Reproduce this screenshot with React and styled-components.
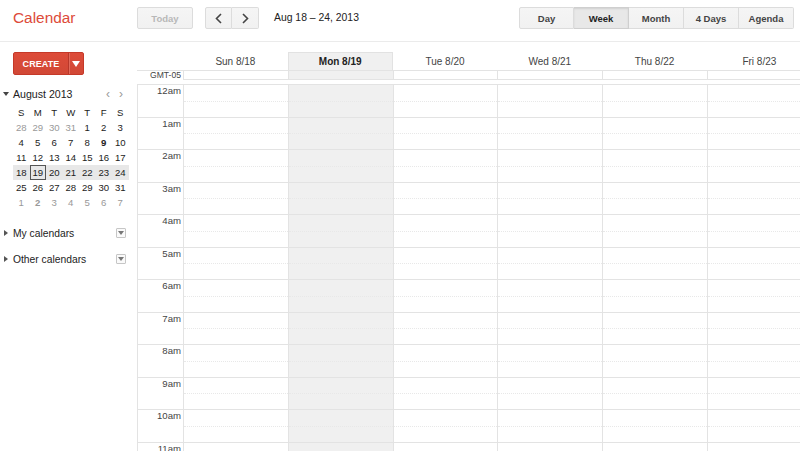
import React from 'react';
import styled, { createGlobalStyle } from 'styled-components';

const GlobalStyle = createGlobalStyle`
  html, body {
    margin: 0;
    padding: 0;
    background: #fff;
    font-family: "Liberation Sans", Arial, sans-serif;
    color: #222;
    overflow: hidden;
  }
  * {
    box-sizing: border-box;
  }
`;

const COL_W = 104.8;
const HOUR_H = 32.5;

const days = [
  { label: 'Sun 8/18' },
  { label: 'Mon 8/19', today: true },
  { label: 'Tue 8/20' },
  { label: 'Wed 8/21' },
  { label: 'Thu 8/22' },
  { label: 'Fri 8/23' },
  { label: '' },
];

const hours = [
  '12am', '1am', '2am', '3am', '4am', '5am', '6am', '7am', '8am', '9am', '10am', '11am',
];

const weeks = [
  [
    { d: 28, other: true }, { d: 29, other: true }, { d: 30, other: true }, { d: 31, other: true },
    { d: 1 }, { d: 2 }, { d: 3 },
  ],
  [{ d: 4 }, { d: 5 }, { d: 6 }, { d: 7 }, { d: 8 }, { d: 9, bold: true }, { d: 10 }],
  [{ d: 11 }, { d: 12 }, { d: 13 }, { d: 14 }, { d: 15 }, { d: 16 }, { d: 17 }],
  [{ d: 18 }, { d: 19, today: true }, { d: 20 }, { d: 21 }, { d: 22 }, { d: 23 }, { d: 24 }],
  [{ d: 25 }, { d: 26 }, { d: 27 }, { d: 28 }, { d: 29 }, { d: 30 }, { d: 31 }],
  [
    { d: 1, other: true }, { d: 2, other: true, bold: true }, { d: 3, other: true },
    { d: 4, other: true }, { d: 5, other: true }, { d: 6, other: true }, { d: 7, other: true },
  ],
];

const App = () => {
  return (
    <>
      <GlobalStyle />
      <Page>
        <Header>
          <Logo>Calendar</Logo>
          <Toolbar>
            <ToolButton $w={56} $disabled>Today</ToolButton>
            <NavGroup>
              <ToolButton $w={27} $first>
                <Chevron dir="left" />
              </ToolButton>
              <ToolButton $w={27} $last>
                <Chevron dir="right" />
              </ToolButton>
            </NavGroup>
            <DateRange>Aug 18 – 24, 2013</DateRange>
            <ViewGroup>
              {['Day', 'Week', 'Month', '4 Days', 'Agenda'].map((v, i, arr) => (
                <ViewButton
                  key={v}
                  $active={v === 'Week'}
                  $first={i === 0}
                  $last={i === arr.length - 1}
                >
                  {v}
                </ViewButton>
              ))}
            </ViewGroup>
          </Toolbar>
        </Header>

        <Main>
          <Sidebar>
            <CreateButton>
              <CreateLabel>CREATE</CreateLabel>
              <CreateDrop>
                <svg width="8" height="6" viewBox="0 0 8 6">
                  <path d="M0 0 L8 0 L4 6 Z" fill="#fff" />
                </svg>
              </CreateDrop>
            </CreateButton>

            <MiniTitleRow>
              <MiniTitle>
                <Caret>
                  <svg width="6" height="4" viewBox="0 0 6 4">
                    <path d="M0 0 L6 0 L3 4 Z" fill="#444" />
                  </svg>
                </Caret>
                August 2013
              </MiniTitle>
              <MiniNav>
                <span>‹</span>
                <span>›</span>
              </MiniNav>
            </MiniTitleRow>
            <MiniGrid>
              {['S', 'M', 'T', 'W', 'T', 'F', 'S'].map((l, i) => (
                <MiniHead key={i}>{l}</MiniHead>
              ))}
              {weeks.map((week, wi) => (
                <MiniWeek key={wi} $selected={wi === 3}>
                  {week.map((c, ci) => (
                    <MiniDay key={ci} $other={c.other} $bold={c.bold} $today={c.today}>
                      {c.d}
                    </MiniDay>
                  ))}
                </MiniWeek>
              ))}
            </MiniGrid>

            <CalSections>
              {['My calendars', 'Other calendars'].map(name => (
                <CalSection key={name}>
                  <SectionCaret>
                    <svg width="4" height="6" viewBox="0 0 4 6">
                      <path d="M0 0 L4 3 L0 6 Z" fill="#555" />
                    </svg>
                  </SectionCaret>
                  <SectionLabel>{name}</SectionLabel>
                  <MenuBox>
                    <svg width="6" height="4" viewBox="0 0 6 4">
                      <path d="M0 0 L6 0 L3 4 Z" fill="#777" />
                    </svg>
                  </MenuBox>
                </CalSection>
              ))}
            </CalSections>
          </Sidebar>

          <Pane>
            <DayHeaderRow>
              <TimeGutter />
              {days.map((d, i) => (
                <DayHead key={i} $today={d.today}>
                  {d.label}
                </DayHead>
              ))}
            </DayHeaderRow>
            <AllDayRow>
              <TzLabel>GMT-05</TzLabel>
              {days.map((d, i) => (
                <AllDayCell key={i} $today={d.today} />
              ))}
            </AllDayRow>
            <TimeGrid>
              <TimeColumn>
                {hours.map(h => (
                  <TimeLabel key={h}>{h}</TimeLabel>
                ))}
              </TimeColumn>
              {days.map((d, i) => (
                <DayColumn key={i} $today={d.today}>
                  {hours.map(h => (
                    <HourSlot key={h} />
                  ))}
                </DayColumn>
              ))}
            </TimeGrid>
          </Pane>
        </Main>
      </Page>
    </>
  );
};

const Chevron = ({ dir }) => (
  <svg width="7" height="11" viewBox="0 0 7 11">
    <path
      d={dir === 'left' ? 'M6 1 L1.5 5.5 L6 10' : 'M1 1 L5.5 5.5 L1 10'}
      fill="none"
      stroke="#444"
      strokeWidth="1.6"
    />
  </svg>
);

export default App;

const Page = styled.div`
  width: 800px;
  height: 451px;
  overflow: hidden;
  display: flex;
  flex-direction: column;
`;

const Header = styled.div`
  height: 42px;
  flex-shrink: 0;
  display: flex;
  border-bottom: 1px solid #ebebeb;
`;

const Logo = styled.div`
  width: 137px;
  padding-left: 13px;
  padding-top: 9px;
  font-size: 15.4px;
  color: #dd4b39;
  line-height: 18px;
`;

const Toolbar = styled.div`
  flex: 1;
  display: flex;
  align-items: flex-start;
  padding-top: 7px;
  padding-right: 6px;
`;

const ToolButton = styled.div`
  width: ${p => p.$w}px;
  height: 22px;
  display: flex;
  align-items: center;
  justify-content: center;
  border: 1px solid #dcdcdc;
  border-radius: ${p => (p.$first ? '2px 0 0 2px' : p.$last ? '0 2px 2px 0' : '2px')};
  background: linear-gradient(#f5f5f5, #f1f1f1);
  font-size: 9.5px;
  font-weight: bold;
  color: ${p => (p.$disabled ? '#b8b8b8' : '#444')};
  & + & {
    border-left: none;
  }
`;

const NavGroup = styled.div`
  display: flex;
  margin-left: 12px;
`;

const DateRange = styled.div`
  margin-left: 15px;
  font-size: 10.4px;
  line-height: 22px;
  color: #222;
`;

const ViewGroup = styled.div`
  margin-left: auto;
  display: flex;
`;

const ViewButton = styled.div`
  width: 55px;
  height: 22px;
  display: flex;
  align-items: center;
  justify-content: center;
  border: 1px solid ${p => (p.$active ? '#cfcfcf' : '#dcdcdc')};
  border-left: ${p => (p.$first ? '1px solid #dcdcdc' : 'none')};
  border-radius: ${p => (p.$first ? '2px 0 0 2px' : p.$last ? '0 2px 2px 0' : '0')};
  background: ${p => (p.$active ? '#e8e8e8' : 'linear-gradient(#f5f5f5, #f1f1f1)')};
  box-shadow: ${p => (p.$active ? 'inset 0 1px 2px rgba(0,0,0,0.1)' : 'none')};
  font-size: 9.5px;
  font-weight: bold;
  color: ${p => (p.$active ? '#222' : '#444')};
`;

const Main = styled.div`
  flex: 1;
  display: flex;
  min-height: 0;
`;

const Sidebar = styled.div`
  width: 137px;
  flex-shrink: 0;
  padding: 10px 0 0 13px;
`;

const CreateButton = styled.div`
  width: 71px;
  height: 23px;
  display: flex;
  border: 1px solid #c53929;
  border-radius: 2px;
  background: linear-gradient(#dd4b39, #d14836);
`;

const CreateLabel = styled.div`
  width: 54px;
  display: flex;
  align-items: center;
  justify-content: center;
  color: #fff;
  font-size: 9px;
  font-weight: bold;
  letter-spacing: 0.1px;
`;

const CreateDrop = styled.div`
  flex: 1;
  display: flex;
  align-items: center;
  justify-content: center;
  border-left: 1px solid #b8372a;
  box-shadow: inset 1px 0 0 #e06a5b;
`;

const MiniTitleRow = styled.div`
  margin-top: 11px;
  height: 15px;
  width: 115px;
  display: flex;
  align-items: center;
`;

const MiniTitle = styled.div`
  position: relative;
  font-size: 10.6px;
  color: #222;
`;

const Caret = styled.span`
  position: absolute;
  left: -10px;
  top: 4px;
  display: flex;
`;

const MiniNav = styled.div`
  margin-left: auto;
  display: flex;
  gap: 9px;
  padding-right: 5px;
  font-size: 12px;
  color: #999;
`;

const MiniGrid = styled.div`
  width: 115.5px;
  display: grid;
  grid-template-columns: repeat(7, 16.5px);
  margin-top: 4px;
`;

const MiniHead = styled.div`
  height: 15px;
  line-height: 15px;
  text-align: center;
  font-size: 9.6px;
  color: #222;
`;

const MiniWeek = styled.div`
  grid-column: 1 / -1;
  display: grid;
  grid-template-columns: repeat(7, 16.5px);
  background: ${p => (p.$selected ? '#e8e8e8' : 'transparent')};
`;

const MiniDay = styled.div`
  height: 15px;
  line-height: 13px;
  text-align: center;
  font-size: 9.6px;
  font-weight: ${p => (p.$bold ? 'bold' : 'normal')};
  color: ${p => (p.$other ? '#999' : '#222')};
  border: 1px solid ${p => (p.$today ? '#555' : 'transparent')};
`;

const CalSections = styled.div`
  margin-top: 10px;
`;

const CalSection = styled.div`
  width: 113px;
  height: 26px;
  display: flex;
  align-items: center;
  position: relative;
`;

const SectionCaret = styled.span`
  position: absolute;
  left: -9px;
  display: flex;
`;

const SectionLabel = styled.div`
  font-size: 10.3px;
  color: #222;
`;

const MenuBox = styled.div`
  margin-left: auto;
  width: 10px;
  height: 10px;
  border: 1px solid #c6c6c6;
  border-radius: 1px;
  display: flex;
  align-items: center;
  justify-content: center;
  background: #fafafa;
`;

const Pane = styled.div`
  flex: 1;
  min-width: 0;
  overflow: hidden;
  padding-top: 10px;
`;

const DayHeaderRow = styled.div`
  display: flex;
  height: 18px;
`;

const TimeGutter = styled.div`
  width: 46px;
  flex-shrink: 0;
`;

const DayHead = styled.div`
  width: ${COL_W}px;
  flex-shrink: 0;
  text-align: center;
  font-size: 10px;
  line-height: 18px;
  font-weight: ${p => (p.$today ? 'bold' : 'normal')};
  color: ${p => (p.$today ? '#222' : '#444')};
  background: ${p => (p.$today ? '#f0f0f0' : 'transparent')};
  border: 1px solid ${p => (p.$today ? '#e2e2e2' : 'transparent')};
  border-bottom: none;
`;

const AllDayRow = styled.div`
  display: flex;
  height: 10px;
  border-top: 1px solid #e3e3e3;
  margin-bottom: 4px;
`;

const TzLabel = styled.div`
  width: 46px;
  flex-shrink: 0;
  padding-right: 2px;
  text-align: right;
  font-size: 8.6px;
  line-height: 8px;
  color: #444;
`;

const AllDayCell = styled.div`
  width: ${COL_W}px;
  flex-shrink: 0;
  border-bottom: 1px solid #e3e3e3;
  border-left: 1px solid #e3e3e3;
  background: ${p => (p.$today ? '#f0f0f0' : '#fff')};
`;

const TimeGrid = styled.div`
  display: flex;
  border-top: 1px solid #e3e3e3;
  border-left: 1px solid #e3e3e3;
`;

const TimeColumn = styled.div`
  width: 45px;
  flex-shrink: 0;
`;

const TimeLabel = styled.div`
  height: ${HOUR_H}px;
  border-bottom: 1px solid #e3e3e3;
  text-align: right;
  padding-right: 2px;
  font-size: 9.6px;
  line-height: 11px;
  color: #444;
`;

const DayColumn = styled.div`
  width: ${COL_W}px;
  flex-shrink: 0;
  border-left: 1px solid #e3e3e3;
  background: ${p => (p.$today ? '#f0f0f0' : '#fff')};
  box-shadow: ${p => (p.$today ? '1px 0 0 #e3e3e3' : 'none')};
`;

const HourSlot = styled.div`
  height: ${HOUR_H}px;
  border-bottom: 1px solid #e3e3e3;
  display: flex;
  flex-direction: column;
  &::before {
    content: '';
    height: 15.5px;
    border-bottom: 1px dotted #e8e8e8;
  }
`;
